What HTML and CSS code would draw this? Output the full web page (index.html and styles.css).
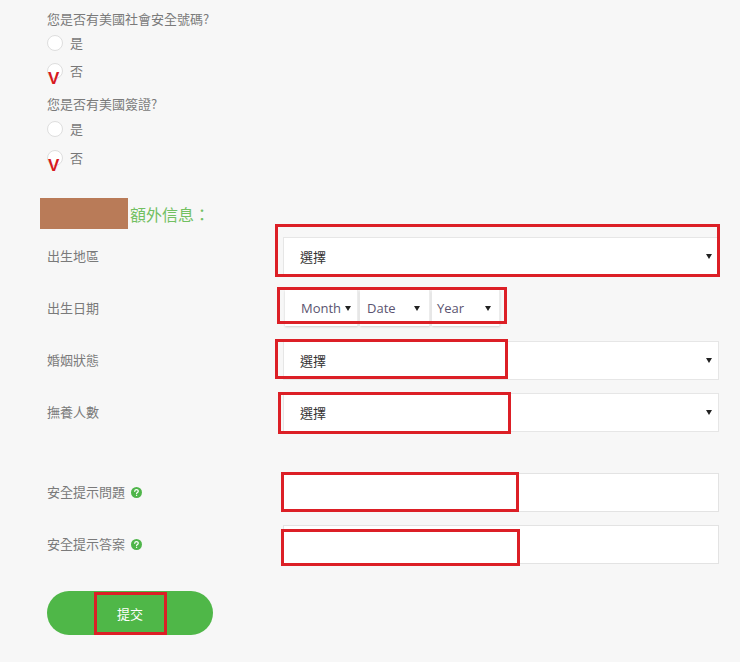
FILE: index.html
```html
<!DOCTYPE html>
<html lang="zh-Hant">
<head>
<meta charset="utf-8">
<title>額外信息</title>
<link rel="stylesheet" href="styles.css">
</head>
<body>
<div class="page">
  <div class="q">您是否有美國社會安全號碼?</div>
  <div class="radio-row"><span class="radio"></span><span class="opt">是</span></div>
  <div class="radio-row"><span class="radio"><span class="mark">V</span></span><span class="opt">否</span></div>
  <div class="q q2">您是否有美國簽證?</div>
  <div class="radio-row"><span class="radio"></span><span class="opt">是</span></div>
  <div class="radio-row"><span class="radio"><span class="mark">V</span></span><span class="opt">否</span></div>

  <div class="heading"><span class="redact"></span><span class="heading-text">額外信息：</span></div>

  <div class="row">
    <div class="label">出生地區</div>
    <div class="field">
      <div class="select"><span>選擇</span><span class="caret"></span></div>
      <span class="note n1"></span>
    </div>
  </div>
  <div class="row">
    <div class="label">出生日期</div>
    <div class="field">
      <div class="date-group">
        <div class="dsel month"><span>Month</span><span class="caret"></span></div>
        <div class="dsel day"><span>Date</span><span class="caret"></span></div>
        <div class="dsel year"><span>Year</span><span class="caret"></span></div>
      </div>
      <span class="note n2"></span>
    </div>
  </div>
  <div class="row">
    <div class="label">婚姻狀態</div>
    <div class="field">
      <div class="select"><span>選擇</span><span class="caret"></span></div>
      <span class="note n3"></span>
    </div>
  </div>
  <div class="row">
    <div class="label">撫養人數</div>
    <div class="field">
      <div class="select"><span>選擇</span><span class="caret"></span></div>
      <span class="note n4"></span>
    </div>
  </div>

  <div class="row row-gap">
    <div class="label">安全提示問題<svg class="help" viewBox="0 0 10 10" width="11" height="11"><circle cx="5" cy="5" r="5" fill="#4fb54a"/><path d="M3.4 3.9 C3.4 2.9 4.1 2.4 5 2.4 C5.9 2.4 6.6 3 6.6 3.8 C6.6 4.7 5.6 4.9 5.2 5.5 L5.1 6.1" fill="none" stroke="#fff" stroke-width="1.1" stroke-linecap="round"/><circle cx="5.1" cy="7.6" r="0.65" fill="#fff"/></svg></div>
    <div class="field">
      <div class="input"></div>
      <span class="note n5"></span>
    </div>
  </div>
  <div class="row">
    <div class="label">安全提示答案<svg class="help" viewBox="0 0 10 10" width="11" height="11"><circle cx="5" cy="5" r="5" fill="#4fb54a"/><path d="M3.4 3.9 C3.4 2.9 4.1 2.4 5 2.4 C5.9 2.4 6.6 3 6.6 3.8 C6.6 4.7 5.6 4.9 5.2 5.5 L5.1 6.1" fill="none" stroke="#fff" stroke-width="1.1" stroke-linecap="round"/><circle cx="5.1" cy="7.6" r="0.65" fill="#fff"/></svg></div>
    <div class="field">
      <div class="input"></div>
      <span class="note n6"></span>
    </div>
  </div>

  <div class="submit-wrap">
    <div class="submit">提交</div>
    <span class="note n7"></span>
  </div>
</div>
</body>
</html>
```
FILE: styles.css
```css
* { box-sizing: border-box; }
html, body { margin: 0; padding: 0; }
body {
  background: #f7f7f7;
  width: 740px;
  height: 662px;
  overflow: hidden;
  font-family: "Noto Sans CJK TC", "Noto Sans", sans-serif;
  font-size: 13px;
  color: #7a7a7a;
}
.page { padding: 9px 0 0 47px; }

.q { line-height: 20px; height: 20px; }
.q2 { margin-top: 9px; }

.radio-row {
  display: flex;
  align-items: center;
  height: 28px;
}
.radio-row + .q2 + .radio-row,
.q2 ~ .radio-row { height: 29px; }
.radio {
  position: relative;
  width: 16px;
  height: 16px;
  border-radius: 50%;
  background: #fff;
  border: 1px solid #dedede;
  flex: none;
}
.opt { margin-left: 7px; line-height: 16px; color: #777; }
.mark {
  position: absolute;
  left: 0px;
  top: 6px;
  font-family: "Liberation Sans", Arial, sans-serif;
  font-weight: bold;
  font-size: 17px;
  line-height: 17px;
  color: #d71920;
}

.heading {
  display: flex;
  align-items: center;
  margin-top: 26px;
  margin-left: -7px;
  height: 31px;
  margin-bottom: 1px;
}
.redact { width: 88px; height: 31px; background: #b97b58; flex: none; }
.heading-text { margin-left: 2px; color: #72c062; font-size: 16px; line-height: 20px; }

.row {
  display: flex;
  align-items: center;
  height: 52px;
}
.row-gap { margin-top: 28px; }
.label {
  width: 236px;
  flex: none;
  display: flex;
  align-items: center;
  line-height: 18px;
}
.help { margin-left: 6px; flex: none; }

.field { position: relative; width: 436px; flex: none; }

.select {
  height: 39px;
  background: #fff;
  border: 1px solid #e6e6e6;
  display: flex;
  align-items: center;
  justify-content: space-between;
  padding: 0 6px 0 16px;
  color: #333;
}
.caret {
  width: 0;
  height: 0;
  border-left: 3.5px solid transparent;
  border-right: 3.5px solid transparent;
  border-top: 5px solid #222;
  flex: none;
}

.date-group {
  display: flex;
  gap: 2px;
  margin-left: 2px;
  height: 36px;
}
.dsel {
  height: 36px;
  background: #fff;
  box-shadow: 0 1px 2px rgba(0, 0, 0, 0.16);
  border-right: 1px solid #ececec;
  display: flex;
  align-items: center;
  justify-content: space-between;
  font-family: "Open Sans", "Noto Sans", sans-serif;
  font-size: 13px;
  color: #5b5470;
}
.month { width: 73px; padding: 0 6px 0 16px; }
.day { width: 70px; padding: 0 9px 0 7px; }
.year { width: 68px; padding: 0 8px 0 5px; }

.input {
  height: 39px;
  background: #fff;
  border: 1px solid #e3e3e3;
}

.note {
  position: absolute;
  border: 3px solid #dc1f26;
  pointer-events: none;
}
.n1 { left: -8px; top: -13px; width: 445px; height: 53px; }
.n2 { left: -6px; top: -3px; width: 230px; height: 37px; }
.n3 { left: -8px; top: -2px; width: 233px; height: 40px; }
.n4 { left: -5px; top: -1px; width: 233px; height: 42px; }
.n5 { left: -2px; top: -1px; width: 238px; height: 40px; }
.n6 { left: -2px; top: 4px; width: 239px; height: 37px; }

.submit-wrap { position: relative; width: 166px; margin-top: 21px; }
.submit {
  width: 166px;
  height: 44px;
  border-radius: 22px;
  background: #4fb748;
  color: #fff;
  display: flex;
  align-items: center;
  justify-content: center;
  font-size: 13px;
}
.n7 { left: 47px; top: 1px; width: 73px; height: 43px; }
```
